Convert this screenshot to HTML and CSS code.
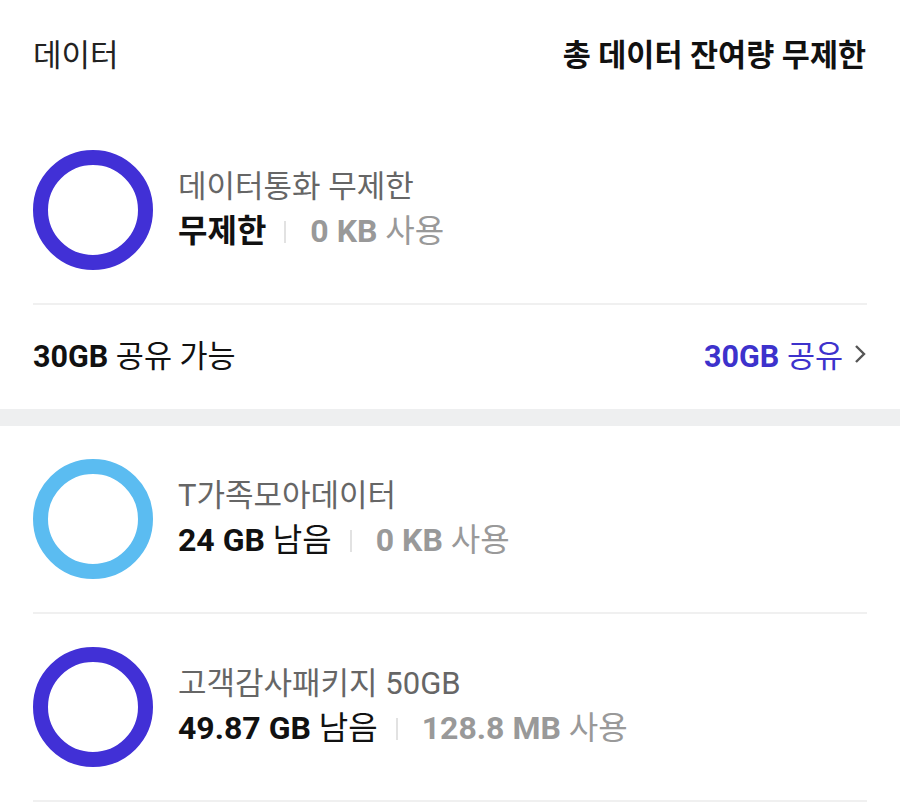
FILE: index.html
```html
<!DOCTYPE html>
<html>
<head>
<meta charset="utf-8">
<title>데이터</title>
<link rel="stylesheet" href="styles.css">
</head>
<body>

<div class="head">
  <span class="head-l">데이터</span>
  <span class="head-r">총 데이터 잔여량 무제한</span>
</div>

<div class="item">
  <div class="ring purple"></div>
  <div class="info">
    <div class="name">데이터통화 무제한</div>
    <div class="usage"><b class="left">무제한</b><i class="bar"></i><span class="used"><b>0 KB</b> 사용</span></div>
  </div>
</div>

<div class="share">
  <span class="share-l"><b>30GB</b> 공유 가능</span>
  <span class="share-r"><span><b>30GB</b> 공유</span>
    <svg class="chev" width="14" height="24" viewBox="0 0 14 24"><path d="M3 4 L11 12 L3 20" fill="none" stroke="#555" stroke-width="2.4"/></svg>
  </span>
</div>

<div class="band"></div>

<div class="item">
  <div class="ring blue"></div>
  <div class="info">
    <div class="name">T가족모아데이터</div>
    <div class="usage"><span class="left"><b>24 GB</b> 남음</span><i class="bar"></i><span class="used"><b>0 KB</b> 사용</span></div>
  </div>
</div>

<div class="item">
  <div class="ring purple"></div>
  <div class="info">
    <div class="name">고객감사패키지 50GB</div>
    <div class="usage"><span class="left"><b>49.87 GB</b> 남음</span><i class="bar"></i><span class="used"><b>128.8 MB</b> 사용</span></div>
  </div>
</div>

</body>
</html>
```

FILE: styles.css
```css
body { margin: 0; background: #fff; font-family: Roboto, "Noto Sans CJK KR", sans-serif; color: #111; }
b { font-weight: 700; }
i { font-style: normal; }

.head { height: 117px; padding: 0 34px 12px 33px; display: flex; align-items: center; justify-content: space-between; box-sizing: border-box; }
.head-l { font-size: 31px; color: #222; }
.head-r { font-size: 30.5px; font-weight: 700; color: #111; }

.item { margin: 0 33px; padding: 33px 0; display: flex; align-items: center; border-bottom: 2px solid #f0f0f0; }
.ring { width: 120px; height: 120px; border-radius: 50%; border: 15px solid; box-sizing: border-box; flex: none; }
.ring.purple { border-color: #4130d6; }
.ring.blue { border-color: #5bbcf1; }

.info { margin-left: 25px; padding-bottom: 2px; }
.name { font-size: 31px; color: #666; line-height: 45px; }
.usage { font-size: 32px; line-height: 45px; display: flex; align-items: center; }
.left { color: #111; }
.bar { width: 2px; height: 22px; background: #e2e2e2; margin: 0 24px 0 18px; }
.used { color: #999; }

.share { height: 104px; margin: 0 33px; padding-bottom: 6px; box-sizing: border-box; display: flex; align-items: center; justify-content: space-between; font-size: 30.5px; }
.share-l { color: #111; }
.share-r { color: #3d32cc; display: flex; align-items: center; }
.chev { margin-left: 10px; }

.band { height: 17px; background: #eeeff0; }
```
